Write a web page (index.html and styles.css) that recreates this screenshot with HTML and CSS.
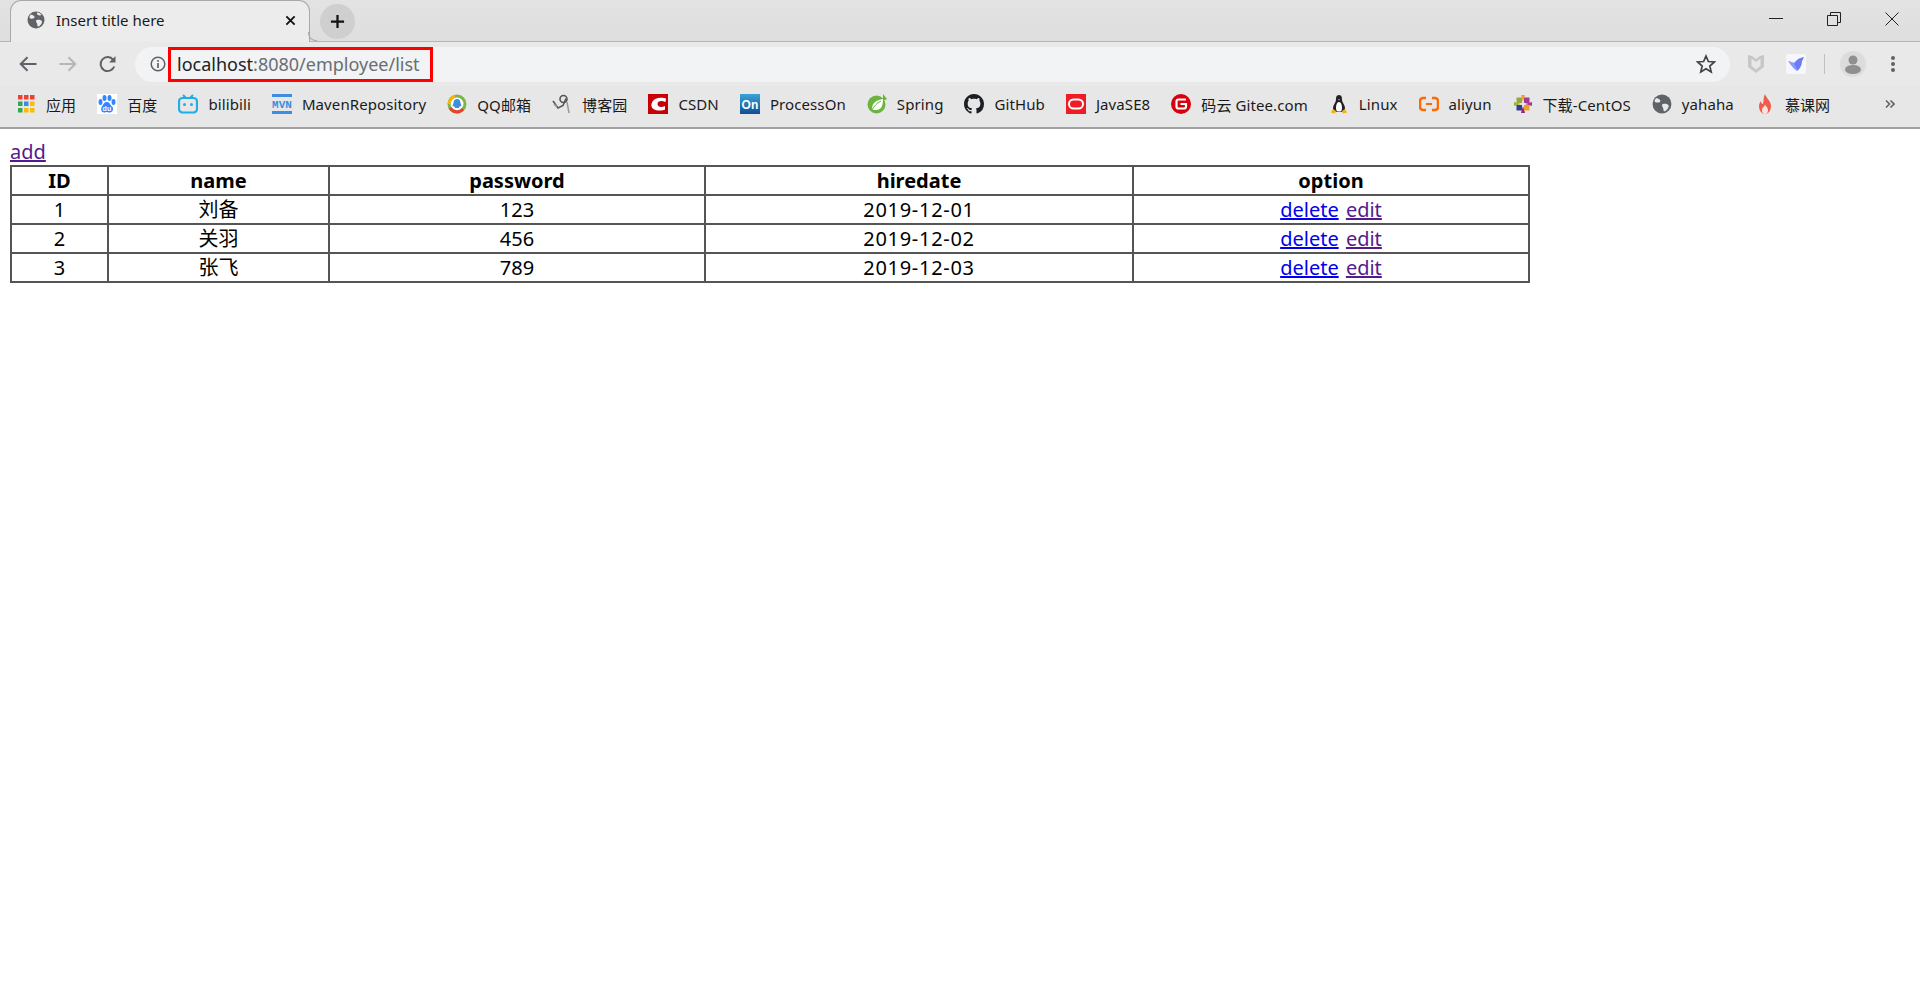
FILE: index.html
```html
<!DOCTYPE html>
<html lang="zh">
<head>
<meta charset="utf-8">
<title>Insert title here</title>
<link rel="stylesheet" href="styles.css">
</head>
<body>
<header class="chrome">
  <div class="tabstrip">
    <div class="tab">
      <svg class="tab-globe" viewBox="0 0 18 18"><circle cx="9" cy="9" r="8.5" fill="#5f6368"/><path d="M4 3.500c2 .5 3 1 3.500 2.500S5 8 3.500 7.500 2 5 4 3.500zM10 9c2-.5 4.500 0 5 1.500s-2 4.500-3.500 5-1-2-1.500-3-2-3 0-3.500zM10.500 1.500c1.500 0 3 1 4 2.500-1 .5-2.500.5-3.500 0s-1.500-2.500-.5-2.500z" fill="#eceded"/></svg>
      <span class="tab-title">Insert title here</span>
      <svg class="tab-close" viewBox="0 0 12 12"><path d="M1.500 1.500l9 9M10.500 1.500l-9 9" stroke="#111" stroke-width="2" fill="none"/></svg>
    </div>
    <div class="newtab"><svg viewBox="0 0 16 16"><path d="M8 1v14M1 8h14" stroke="#111" stroke-width="2.400" fill="none"/></svg></div>
    <div class="winctl">
      <svg class="win-icon" viewBox="0 0 14 14"><path d="M0 6.500h14" stroke="#222" fill="none"/></svg>
      <svg class="win-icon" viewBox="0 0 14 14"><path d="M.5 3.500h10v10H.5zM3.500 3.500V.5h10v10h-3" stroke="#222" fill="none"/></svg>
      <svg class="win-icon" viewBox="0 0 14 14"><path d="M.5.5l13 13M13.500.5l-13 13" stroke="#222" fill="none"/></svg>
    </div>
  </div>
  <div class="toolbar">
    <svg class="nav-icon" viewBox="0 0 18 16"><path d="M17.500 8H2M8.500 1.200L1.700 8l6.800 6.800" stroke="#5f6368" stroke-width="2" fill="none"/></svg>
    <svg class="nav-icon" viewBox="0 0 18 16"><path d="M.5 8H16M9.500 1.200L16.300 8l-6.800 6.800" stroke="#b4b6b8" stroke-width="2" fill="none"/></svg>
    <svg class="nav-icon" viewBox="0 0 18 18"><path d="M15.200 11.500a7 7 0 1 1-1-6.700" stroke="#5f6368" stroke-width="2" fill="none"/><path d="M16.500 1v6.500H10z" fill="#5f6368"/></svg>
    <div class="omnibox">
      <svg class="info" viewBox="0 0 16 16"><circle cx="8" cy="8" r="6.800" stroke="#5f6368" stroke-width="1.500" fill="none"/><path d="M8 7v5M8 4v1.800" stroke="#5f6368" stroke-width="1.700"/></svg>
      <span class="url"><b class="host">localhost</b>:8080/employee/list</span>
      <svg class="star" viewBox="0 0 20 20"><path d="M10 2l2.400 5.500 6 .5-4.600 4 1.400 5.900L10 14.800 4.800 17.900 6.200 12 1.600 8l6-.5z" stroke="#444" stroke-width="1.700" fill="none"/></svg>
    </div>
    <svg class="ext-mask" viewBox="0 0 16 20"><path d="M0 1l4 1 4 3 4-3 4-1v12l-8 6-8-6z" fill="#c6c8c8"/><path d="M3.500 4.500L8 8l4.500-3.500V12L8 15.500 3.500 12z" fill="#e8e8e8"/></svg>
    <svg class="ext-bird" viewBox="0 0 20 20"><rect width="20" height="20" rx="3" fill="#f7f7fb"/><path d="M2 7l6 2 3-3c2-2 4-2 7-3-1 2-1 3-2 4 0 4-2 8-5 10-1-3-3-6-9-10z" fill="#6b7cf6"/><path d="M8 9l3 8c-2-1-5-4-9-10z" fill="#8a9dfb"/></svg>
    <span class="tool-sep"></span>
    <svg class="avatar" viewBox="0 0 26 26"><circle cx="13" cy="13" r="13" fill="#dcdcdc"/><circle cx="13" cy="9" r="4.500" fill="#8f8f8f"/><ellipse cx="13" cy="18.500" rx="8" ry="4.500" fill="#8f8f8f"/></svg>
    <svg class="dots" viewBox="0 0 6 18"><circle cx="3" cy="3" r="2" fill="#5f6368"/><circle cx="3" cy="9" r="2" fill="#5f6368"/><circle cx="3" cy="15" r="2" fill="#5f6368"/></svg>
  </div>
  <nav class="bookmarks">
    <a class="bm"><svg class="bm-icon" viewBox="0 0 20 20"><g><rect x="2" y="1" width="4.500" height="4.500" fill="#ea4335"/><rect x="8" y="1" width="4.500" height="4.500" fill="#ea4335"/><rect x="14" y="1" width="4.500" height="4.500" fill="#ea4335"/><rect x="2" y="7.500" width="4.500" height="4.500" fill="#34a853"/><rect x="8" y="7.500" width="4.500" height="4.500" fill="#4285f4"/><rect x="14" y="7.500" width="4.500" height="4.500" fill="#fbbc05"/><rect x="2" y="14" width="4.500" height="4.500" fill="#34a853"/><rect x="8" y="14" width="4.500" height="4.500" fill="#fbbc05"/><rect x="14" y="14" width="4.500" height="4.500" fill="#fbbc05"/></g></svg>应用</a>
    <a class="bm"><svg class="bm-icon" viewBox="0 0 20 20"><rect width="20" height="20" fill="#fff"/><g fill="#3385ff"><ellipse cx="3.500" cy="8" rx="2" ry="3"/><ellipse cx="7.500" cy="4" rx="2" ry="3"/><ellipse cx="12.500" cy="4" rx="2" ry="3"/><ellipse cx="16.500" cy="8" rx="2" ry="3"/><path d="M10 8c3 0 3 3 5 4.500s1 6-2 6-2-.5-3-.5-1 .5-3 .5-4-3-2-6S7 8 10 8z"/></g><text x="10" y="16.500" class="du">du</text></svg>百度</a>
    <a class="bm"><svg class="bm-icon" viewBox="0 0 20 20"><path d="M5 1l3 3M15 1l-3 3" stroke="#23ade5" stroke-width="2" fill="none"/><rect x="1" y="4" width="18" height="14.500" rx="3.500" stroke="#23ade5" stroke-width="2.200" fill="none"/><circle cx="6.500" cy="10.500" r="1.500" fill="#23ade5"/><circle cx="13.500" cy="10.500" r="1.500" fill="#23ade5"/></svg>bilibili</a>
    <a class="bm"><svg class="bm-icon" viewBox="0 0 20 20"><rect y="0" width="20" height="3" fill="#3d8ee0"/><rect y="17" width="20" height="3" fill="#3d8ee0"/><text x="10" y="14" class="mvn">MVN</text></svg>MavenRepository</a>
    <a class="bm"><svg class="bm-icon" viewBox="0 0 20 20"><circle cx="10" cy="10" r="8" fill="#fff" stroke="#7ab648" stroke-width="3"/><path d="M2 10a8 8 0 0 1 6-7.800" stroke="#f7b500" stroke-width="3" fill="none"/><path d="M3 14a8 8 0 0 0 13 1" stroke="#e8432e" stroke-width="3" fill="none"/><path d="M10 5c2.500 0 3.500 2 3.500 4l1 3-2 .5-.5 1.500H8l-.5-1.500-2-.5 1-3c0-2 1-4 3.500-4z" fill="#3d8fe0"/></svg>QQ邮箱</a>
    <a class="bm"><svg class="bm-icon" viewBox="0 0 20 20"><path d="M1 7l5 7 5-2.500 3-7" stroke="#555" stroke-width="1.600" fill="none"/><circle cx="11.500" cy="5" r="3.500" stroke="#555" stroke-width="1.600" fill="none"/><path d="M15 8l2 11M5 13l-3-3" stroke="#999" stroke-width="1.500" fill="none"/></svg>博客园</a>
    <a class="bm"><svg class="bm-icon" viewBox="0 0 20 20"><rect width="20" height="20" fill="#c70008"/><path d="M18 4.500C14 3 5 3 3.500 10S13 17.500 17 15.500v-3.500c-3 1.500-7.500 1.500-7.500-2s4.500-3.500 8-2z" fill="#fff"/></svg>CSDN</a>
    <a class="bm"><svg class="bm-icon" viewBox="0 0 20 20"><defs><linearGradient id="on" x1="0" y1="0" x2="0" y2="1"><stop offset="0" stop-color="#39a3d6"/><stop offset="1" stop-color="#0f4f96"/></linearGradient></defs><rect width="20" height="20" fill="url(#on)"/><text x="10" y="14.500" class="on">On</text></svg>ProcessOn</a>
    <a class="bm"><svg class="bm-icon" viewBox="0 0 20 20"><circle cx="9.500" cy="10.500" r="9" fill="#6cb33f"/><path d="M5 15c0-6 4-9 11-10 0 7-2 11-7 11-2 0-3 0-4-1z" fill="#fff"/><path d="M5 16c2-4 5-7 9-9" stroke="#6cb33f" fill="none"/><path d="M16 0l4 5-4 2z" fill="#6cb33f"/></svg>Spring</a>
    <a class="bm"><svg class="bm-icon" viewBox="0 0 16 16"><path fill="#1b1f23" d="M8 0C3.580 0 0 3.580 0 8c0 3.540 2.290 6.530 5.470 7.590.4.070.55-.17.55-.38 0-.19-.01-.82-.01-1.490-2.010.37-2.530-.49-2.690-.94-.09-.23-.48-.94-.82-1.130-.28-.15-.68-.52-.01-.53.630-.01 1.080.58 1.230.82.720 1.210 1.870.87 2.330.66.070-.52.28-.87.510-1.070-1.780-.2-3.640-.89-3.640-3.950 0-.87.310-1.590.820-2.150-.08-.2-.36-1.020.08-2.120 0 0 .67-.21 2.200.82.640-.18 1.320-.27 2-.27s1.360.09 2 .27c1.530-1.040 2.200-.82 2.200-.82.440 1.100.16 1.920.08 2.120.51.560.82 1.270.82 2.150 0 3.070-1.870 3.750-3.650 3.950.29.250.54.730.54 1.480 0 1.070-.01 1.930-.01 2.200 0 .21.150.46.550.38A8.010 8.010 0 0 0 16 8c0-4.420-3.580-8-8-8z"/></svg>GitHub</a>
    <a class="bm"><svg class="bm-icon" viewBox="0 0 20 20"><rect width="20" height="20" fill="#ee1c25"/><rect x="3" y="5.500" width="14" height="9" rx="4.500" fill="none" stroke="#fff" stroke-width="2"/></svg>JavaSE8</a>
    <a class="bm"><svg class="bm-icon" viewBox="0 0 20 20"><circle cx="10" cy="10" r="10" fill="#d7000f"/><path d="M15 5.500H7.500a2 2 0 0 0-2 2v5a2 2 0 0 0 2 2H13a2 2 0 0 0 2-2V10H9.500" stroke="#fff" stroke-width="2.200" fill="none"/></svg>码云 Gitee.com</a>
    <a class="bm"><svg class="bm-icon" viewBox="0 0 20 20"><path d="M10 1c3 0 3 3 3 5s3 5 3 8-2 4-6 4-6-1-6-4 3-6 3-8 0-5 3-5z" fill="#222"/><path d="M10 8c2 0 3 3 3 6s-1 3.500-3 3.500-3-.5-3-3.500 1-6 3-6z" fill="#fff"/><path d="M9 5h2l-1 1.500z" fill="#f5b400"/><path d="M4 15l3 2-1 2.500-4-1zM16 15l-3 2 1 2.500 4-1z" fill="#f5b400"/></svg>Linux</a>
    <a class="bm"><svg class="bm-icon" viewBox="0 0 20 20"><path d="M7 4H4a3 3 0 0 0-3 3v6a3 3 0 0 0 3 3h3M13 4h3a3 3 0 0 1 3 3v6a3 3 0 0 1-3 3h-3" stroke="#ff6a00" stroke-width="2.500" fill="none"/><path d="M7 10h6" stroke="#ff6a00" stroke-width="2"/></svg>aliyun</a>
    <a class="bm"><svg class="bm-icon" viewBox="0 0 20 20"><path d="M8 1h4l-2 7z" fill="#e9a22c"/><path d="M19 8v4l-7-2z" fill="#a9378e"/><path d="M8 19h4l-2-7z" fill="#93267a"/><path d="M1 8v4l7-2z" fill="#8fb73e"/><rect x="3.500" y="3.500" width="5.500" height="5.500" fill="#9aa83a"/><rect x="11" y="3.500" width="5.500" height="5.500" fill="#a9378e"/><rect x="3.500" y="11" width="5.500" height="5.500" fill="#3a3a8e"/><rect x="11" y="11" width="5.500" height="5.500" fill="#e9a22c"/></svg>下载-CentOS</a>
    <a class="bm"><svg class="bm-icon" viewBox="0 0 18 18"><circle cx="9" cy="9" r="8.500" fill="#5f6368"/><path d="M4 3.500c2 .5 3 1 3.500 2.500S5 8 3.500 7.500 2 5 4 3.500zM10 9c2-.5 4.500 0 5 1.500s-2 4.500-3.500 5-1-2-1.500-3-2-3 0-3.500z" fill="#e8e8e8"/></svg>yahaha</a>
    <a class="bm"><svg class="bm-icon" viewBox="0 0 20 20"><path d="M10 0c1 4 6 7 6 12s-3 8-6 8-6-3-6-8c0-2 1-4 2-5 0 2 1 3 2 3 1-3 0-6 2-10z" fill="#ef5b4c"/><path d="M10 10c0 2 3 3 3 6s-1.500 4-3 4-3-1-3-4 3-3 3-6z" fill="#fbe3dc"/></svg>慕课网</a>
    <svg class="bm-more" viewBox="0 0 10 10"><path d="M1 1.500L4.500 5 1 8.500M5.500 1.500L9 5 5.500 8.500" stroke="#5f6368" stroke-width="1.600" fill="none"/></svg>
  </nav>
</header>
<main class="page">
  <a class="link visited" href="#add">add</a>
  <table class="grid">
    <colgroup><col class="c1"><col class="c2"><col class="c3"><col class="c4"><col class="c5"></colgroup>
    <thead><tr><th>ID</th><th>name</th><th>password</th><th>hiredate</th><th>option</th></tr></thead>
    <tbody>
      <tr><td>1</td><td>刘备</td><td>123</td><td class="date">2019-12-01</td><td><a class="link fresh" href="#d1">delete</a> <a class="link visited" href="#e1">edit</a></td></tr>
      <tr><td>2</td><td>关羽</td><td>456</td><td class="date">2019-12-02</td><td><a class="link fresh" href="#d2">delete</a> <a class="link visited" href="#e2">edit</a></td></tr>
      <tr><td>3</td><td>张飞</td><td>789</td><td class="date">2019-12-03</td><td><a class="link fresh" href="#d3">delete</a> <a class="link visited" href="#e3">edit</a></td></tr>
    </tbody>
  </table>
</main>
</body>
</html>
```
FILE: styles.css
```css
* { box-sizing: border-box; }
html, body { margin: 0; padding: 0; background: #fff; }
body { font-family: "Noto Sans", "Noto Sans CJK SC", sans-serif; color: #000; }

.chrome { display: flex; flex-direction: column; height: 129px; background: #e7e7e7; border-bottom: 2px solid #a2a2a2; }

.tabstrip { display: flex; align-items: flex-start; height: 42px; flex: none; padding-left: 10px; background: linear-gradient(#e3e3e3, #dedede); border-bottom: 1px solid #b5b5b5; }
.tab { position: relative; display: flex; align-items: center; width: 300px; height: 42px; padding: 0 12px 3px 16px; background: #ececec; border: 1px solid #a9a9a9; border-bottom: 0; border-radius: 11px 11px 0 0; }
.tab::after { content: ""; position: absolute; right: -8px; bottom: 1px; width: 8px; height: 8px; border-left: 1px solid #a9a9a9; border-bottom: 1px solid #a9a9a9; border-bottom-left-radius: 8px; }
.tab-globe { width: 18px; height: 18px; flex: none; }
.tab-title { margin-left: 11px; flex: 1; font-size: 15px; color: #1a1a1a; }
.tab-close { width: 11px; height: 11px; flex: none; margin-right: 1px; }
.newtab { display: flex; align-items: center; justify-content: center; width: 35px; height: 35px; margin: 4px 0 0 10px; border-radius: 50%; background: #cfcfcf; }
.newtab svg { width: 15px; height: 15px; }
.winctl { display: flex; align-items: flex-start; gap: 44px; margin: 12px 21px 0 auto; }
.win-icon { width: 14px; height: 14px; }

.toolbar { display: flex; align-items: center; height: 44px; flex: none; padding-left: 19px; background: #e9e9e9; }
.nav-icon { width: 18px; height: 18px; flex: none; margin-right: 22px; }
.omnibox { display: flex; align-items: center; width: 1595px; height: 35px; margin: 0 0 0 -4px; padding-left: 15px; border-radius: 18px; background: #f1f3f4; flex: none; }
.info { width: 16px; height: 16px; flex: none; }
.url { display: block; width: 265px; height: 35px; margin-left: 2px; padding-left: 6px; border: 3px solid #f00; font-size: 18px; line-height: 28px; color: #6a6e73; white-space: nowrap; }
.host { font-weight: 400; color: #202124; }
.star { width: 20px; height: 20px; margin-left: auto; margin-right: 14px; flex: none; }
.ext-mask { width: 16px; height: 20px; margin-left: 18px; flex: none; }
.ext-bird { width: 20px; height: 20px; margin-left: 22px; flex: none; }
.tool-sep { width: 1px; height: 20px; margin-left: 18px; background: #c2c2c2; flex: none; }
.avatar { width: 26px; height: 26px; margin-left: 15px; flex: none; }
.dots { width: 6px; height: 18px; margin-left: 24px; flex: none; }

.bookmarks { display: flex; align-items: center; gap: 21px; height: 41px; flex: none; padding: 0 0 5px 16px; background: #e7e7e7; }
.bm { display: flex; align-items: center; gap: 10px; font-size: 15px; letter-spacing: .1px; color: #1a1a1a; white-space: nowrap; }
.bm-icon { width: 20px; height: 20px; flex: none; }
.bm-more { width: 10px; height: 10px; margin-left: auto; margin-right: 25px; flex: none; }
.du { font: 700 7px "Liberation Sans", sans-serif; fill: #fff; text-anchor: middle; }
.mvn { font: 700 11px "Liberation Mono", monospace; fill: #3d8ee0; text-anchor: middle; }
.on { font: 700 12px "Liberation Sans", sans-serif; fill: #fff; text-anchor: middle; }

.page { padding: 10px 10px 0; font-size: 20px; line-height: 26px; }
.link { text-decoration: underline; }
.visited { color: #551a8b; }
.fresh { color: #00e; margin-right: 2px; }

.grid { display: table; table-layout: fixed; width: 1518px; border-collapse: collapse; border: 2px solid #555; }
.grid th, .grid td { height: 29px; padding: 0; border: 2px solid #555; text-align: center; line-height: 26px; }
.grid th { font-weight: 700; }
.date { letter-spacing: .7px; }
.c1 { width: 97px; }
.c2 { width: 221px; }
.c3 { width: 376px; }
.c4 { width: 428px; }
.c5 { width: 396px; }
```
